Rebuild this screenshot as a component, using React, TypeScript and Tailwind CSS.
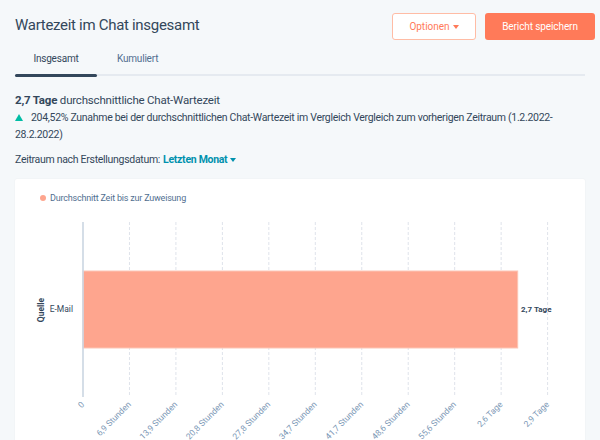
import React from 'react';

const ticks = [
  '0',
  '6,9 Stunden',
  '13,9 Stunden',
  '20,8 Stunden',
  '27,8 Stunden',
  '34,7 Stunden',
  '41,7 Stunden',
  '48,6 Stunden',
  '55,6 Stunden',
  '2,6 Tage',
  '2,9 Tage',
];

const X0 = 83;
const STEP = 46.46;

const Chart: React.FC = () => (
  <svg width={580} height={230} viewBox="15 210 580 230" className="block">
    {ticks.map((_, i) =>
      i === 0 ? null : (
        <line
          key={i}
          x1={X0 + i * STEP}
          x2={X0 + i * STEP}
          y1={222}
          y2={397}
          stroke="#dfe3eb"
          strokeWidth={1}
          strokeDasharray="3 2"
        />
      )
    )}
    <rect x={X0} y={271} width={434.7} height={77} fill="#fea58e" stroke="#fcc5b5" strokeWidth={1} />
    <line x1={X0} x2={X0} y1={222} y2={397} stroke="#cbd6e2" strokeWidth={1.6} />
    <text
      x={42}
      y={310}
      transform="rotate(-90 42 310)"
      textAnchor="middle"
      dominantBaseline="middle"
      fontSize={8.5}
      fontWeight={700}
      fill="#33475b"
    >
      Quelle
    </text>
    <text x={73} y={310} textAnchor="end" dominantBaseline="middle" fontSize={8.5} fill="#33475b">
      E-Mail
    </text>
    <text x={521} y={310} dominantBaseline="middle" fontSize={8} fontWeight={700} fill="#33475b">
      2,7 Tage
    </text>
    {ticks.map((t, i) => {
      const x = X0 + i * STEP + 2;
      const y = 405;
      return (
        <text
          key={t}
          x={x}
          y={y}
          textAnchor="end"
          transform={`rotate(-45 ${x} ${y})`}
          fontSize={8.5}
          fill="#7c98b6"
        >
          {t}
        </text>
      );
    })}
  </svg>
);

const App: React.FC = () => {
  return (
    <div
      className="w-[600px] h-[440px] overflow-hidden bg-[#f5f8fa] text-[#33475b]"
      style={{ fontFamily: 'Roboto, sans-serif' }}
    >
      {/* Header */}
      <div className="flex items-start justify-between pl-[15px] pr-[5px] pt-[13px]">
        <h1 className="text-[15px] leading-[20px] mt-[2px] tracking-[-0.3px]">Wartezeit im Chat insgesamt</h1>
        <div className="flex gap-[9px]">
          <button className="h-[27px] w-[84px] rounded-[3px] border border-[#ffbca5] bg-white text-[10px] text-[#ff7a59] flex items-center justify-center gap-[3px]">
            Optionen
            <span className="inline-block w-0 h-0 border-l-[3.5px] border-r-[3.5px] border-t-[4px] border-l-transparent border-r-transparent border-t-[#ff7a59]" />
          </button>
          <button className="h-[27px] w-[110px] rounded-[3px] bg-[#ff7a59] text-[10px] tracking-[-0.1px] text-white">
            Bericht speichern
          </button>
        </div>
      </div>

      {/* Tabs */}
      <div className="mx-[15px] mt-[11px] relative">
        <div className="flex text-[10px] tracking-[-0.2px] text-[#33475b] h-[22px] items-start">
          <div className="w-[82px] text-center">Insgesamt</div>
          <div className="ml-[20px] text-[#516f90]">Kumuliert</div>
        </div>
        <div className="h-[2px] bg-[#e5eaf0] relative mt-[1px]">
          <div className="absolute left-0 top-[-0.5px] h-[3px] w-[82px] rounded-full bg-[#33475b]" />
        </div>
      </div>

      {/* Summary */}
      <div className="px-[15px] mt-[16px] leading-[17px]">
        <div className="text-[11.5px] tracking-[-0.2px]">
          <span className="font-bold">2,7 Tage</span> durchschnittliche Chat-Wartezeit
        </div>
        <div className="text-[10.5px] tracking-[-0.3px] leading-[17px]">
          <div className="flex items-center whitespace-nowrap">
            <span className="inline-block w-0 h-0 mr-[8px] shrink-0 border-l-[4px] border-r-[4px] border-b-[7px] border-l-transparent border-r-transparent border-b-[#00bda5]" />
            204,52% Zunahme bei der durchschnittlichen Chat-Wartezeit im Vergleich Vergleich zum vorherigen Zeitraum (1.2.2022-
          </div>
          <div>28.2.2022)</div>
        </div>
      </div>

      <div className="px-[15px] mt-[9px] text-[10.5px] tracking-[-0.3px] text-[#33475b] flex items-center gap-[3px]">
        Zeitraum nach Erstellungsdatum:
        <span className="font-bold text-[#0091ae] flex items-center gap-[3px]">
          Letzten Monat
          <span className="inline-block w-0 h-0 border-l-[3px] border-r-[3px] border-t-[4px] border-l-transparent border-r-transparent border-t-[#0091ae]" />
        </span>
      </div>

      {/* Card */}
      <div className="mx-[15px] mt-[11px] bg-white rounded-[2px] shadow-[0_0_2px_rgba(0,0,0,0.06)] h-[300px]">
        <div className="flex gap-[4px] pl-[25px] pt-[13px] h-[31px] items-start text-[9px] tracking-[-0.2px] leading-[12px] text-[#516f90]">
          <span className="w-[6px] h-[6px] mt-[3px] rounded-full bg-[#fea58e]" />
          Durchschnitt Zeit bis zur Zuweisung
        </div>
        <Chart />
      </div>
    </div>
  );
};

export default App;
